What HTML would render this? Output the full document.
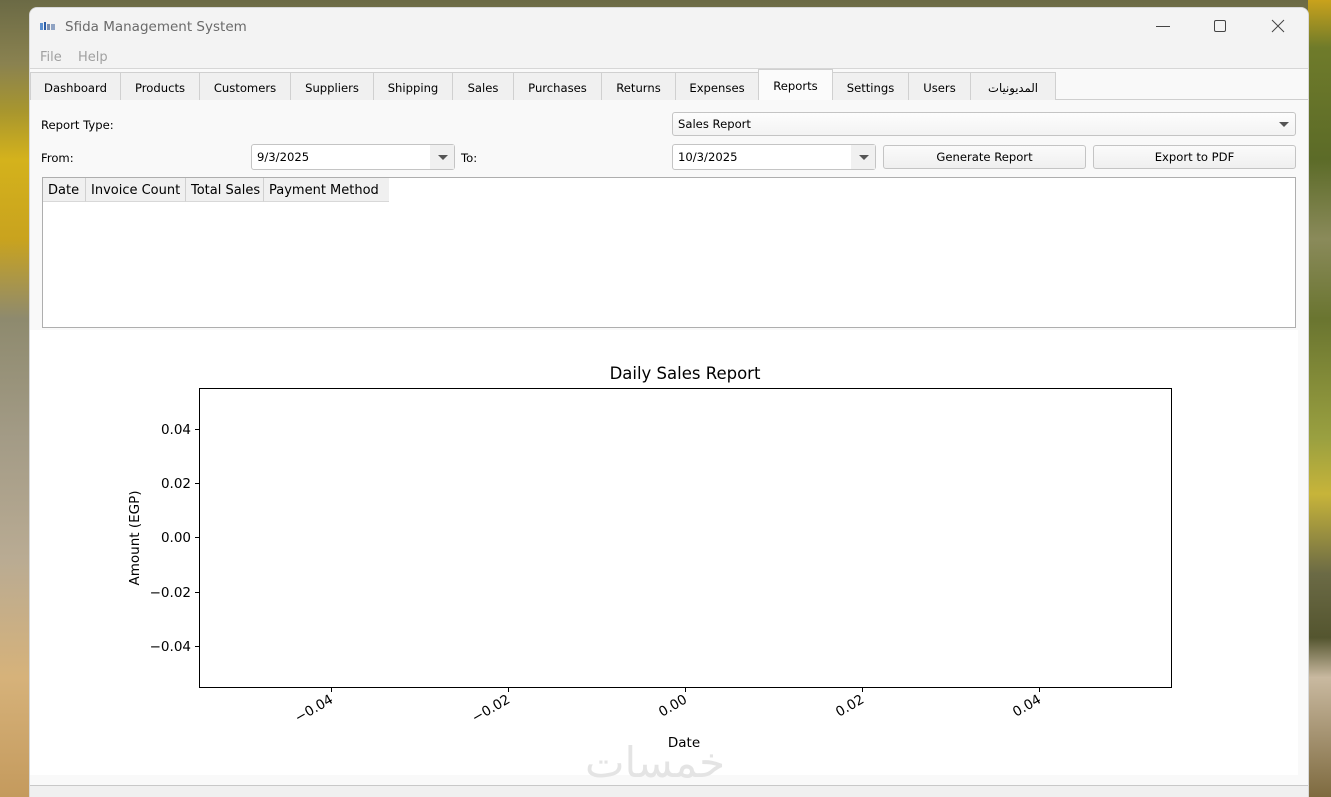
<!DOCTYPE html>
<html><head><meta charset="utf-8"><style>
*{margin:0;padding:0;box-sizing:border-box}
body{width:1331px;height:797px;overflow:hidden;position:relative;font-family:"Liberation Sans","DejaVu Sans",sans-serif;font-size:12px;color:#000;
background:linear-gradient(to bottom,#6b6a45 0,#8a8250 8%,#a8962e 14%,#d4b21c 20%,#c9a31e 30%,#8e8a6e 40%,#a39b86 55%,#b9ab93 70%,#d6b27a 85%,#c49a5d 100%);}
.right{position:absolute;left:1308px;top:0;width:23px;height:797px;background:linear-gradient(to bottom,#c9a21c 0,#6f7b2a 6%,#5c6b28 20%,#8a8a5a 30%,#6a7530 40%,#9aa040 55%,#c7b43a 62%,#6b6a45 72%,#54552f 80%,#c9b9a0 85%,#7e6a3f 100%)}
.win{position:absolute;left:30px;top:8px;width:1278px;height:789px;background:#f9f9f9;border-radius:7px 7px 0 0;overflow:hidden;box-shadow:0 0 0 1px #d8d8d8}
.title{height:37px;background:#f3f3f3;position:relative}
.title .t{position:absolute;left:35px;top:10px;color:#6a6a6a;font-family:"DejaVu Sans",sans-serif;font-size:13.5px}
.menu{height:24px;background:#f3f3f3;border-bottom:1px solid #d6d6d6;position:relative}
.menu span{position:absolute;top:5px;color:#a0a0a0;font-family:"DejaVu Sans",sans-serif;font-size:13px}
.tabs{position:absolute;top:63px;left:0;width:1278px;height:29px;border-bottom:1px solid #cfcfcf}
.tab{position:absolute;top:1px;height:28px;background:#f0f0f0;border:1px solid #d0d0d0;border-bottom:none;text-align:center;line-height:30px;font-family:"DejaVu Sans","Noto Sans CJK SC",sans-serif;font-size:11.6px}
.tab.sel{top:-2px;height:31px;background:#fbfbfb;line-height:32px;z-index:2}
.lbl{position:absolute;font-family:"DejaVu Sans",sans-serif;font-size:11.6px}
.combo{position:absolute;background:linear-gradient(#fdfdfd,#f3f3f3);border:1px solid #c4c4c4;border-radius:3px;font-family:"DejaVu Sans",sans-serif;font-size:11.6px;padding-left:5px;line-height:22px}
.combo.w{background:#fff}
.arr{position:absolute;right:6px;top:9px;width:0;height:0;border-left:5px solid transparent;border-right:5px solid transparent;border-top:5px solid #555}
.dd{position:absolute;right:0;top:0;width:24px;height:100%;background:#f0f0f0}
.btn{position:absolute;background:linear-gradient(#fbfbfb,#efefef);border:1px solid #c4c4c4;border-radius:3px;text-align:center;line-height:22px;font-family:"DejaVu Sans",sans-serif;font-size:11.6px}
.table{position:absolute;left:12px;top:169px;width:1254px;height:151px;background:#fff;border:1px solid #aeaeae}
.hd{position:absolute;top:0;height:24px;background:#f0f0f0;border-right:1px solid #d0d0d0;border-bottom:1px solid #d8d8d8;line-height:25px;font-family:"DejaVu Sans",sans-serif;font-size:13px;padding-left:5px}
.chart{position:absolute;left:0;top:322px;width:1268px;height:445px;background:#fff}
.status{position:absolute;left:0;top:777px;width:1278px;height:12px;background:#f0f0f0;border-top:1px solid #c8c8c8}
.wm{position:absolute;left:585px;top:738px;font-size:42px;color:#e4e4e4;font-family:"DejaVu Sans",sans-serif;z-index:5}
</style></head><body>
<div class="right"></div>
<div class="win">
 <div class="title">
  <svg style="position:absolute;left:9px;top:12px" width="18" height="12"><rect x="1" y="3" width="3" height="7" fill="#5b8fd0"/><rect x="5" y="2" width="2" height="8" fill="#2d5fa8"/><rect x="8" y="4" width="3" height="6" fill="#7a8fb0"/><rect x="12" y="4" width="4" height="6" fill="#8fa3c3"/></svg>
  <span class="t" style="top:11px">Sfida Management System</span>
  <svg style="position:absolute;left:1125px;top:11px" width="16" height="16"><line x1="1" y1="7.5" x2="15" y2="7.5" stroke="#444" stroke-width="1"/></svg>
  <svg style="position:absolute;left:1183px;top:11px" width="16" height="16"><rect x="1.5" y="1.5" width="11" height="11" rx="1.5" fill="none" stroke="#444" stroke-width="1"/></svg>
  <svg style="position:absolute;left:1241px;top:11px" width="16" height="16"><path d="M1 1L13 13M13 1L1 13" stroke="#444" stroke-width="1"/></svg>
 </div>
 <div class="menu"><span style="left:10px">File</span><span style="left:48px">Help</span></div>
 <div class="tabs">
  <div class="tab" style="left:0;width:91px">Dashboard</div>
  <div class="tab" style="left:90px;width:80px">Products</div>
  <div class="tab" style="left:169px;width:92px">Customers</div>
  <div class="tab" style="left:260px;width:84px">Suppliers</div>
  <div class="tab" style="left:343px;width:80px">Shipping</div>
  <div class="tab" style="left:422px;width:62px">Sales</div>
  <div class="tab" style="left:483px;width:89px">Purchases</div>
  <div class="tab" style="left:571px;width:75px">Returns</div>
  <div class="tab" style="left:645px;width:84px">Expenses</div>
  <div class="tab sel" style="left:728px;width:75px">Reports</div>
  <div class="tab" style="left:802px;width:77px">Settings</div>
  <div class="tab" style="left:878px;width:63px">Users</div>
  <div class="tab" style="left:940px;width:86px">المديونيات</div>
 </div>
 <div class="lbl" style="left:11px;top:110px">Report Type:</div>
 <div class="combo" style="left:642px;top:104px;width:624px;height:24px;line-height:23px">Sales Report<span class="arr"></span></div>
 <div class="lbl" style="left:11px;top:143px">From:</div>
 <div class="combo w" style="left:221px;top:136px;width:204px;height:26px;line-height:25px">9/3/2025<span class="dd"></span><span class="arr" style="top:10px"></span></div>
 <div class="lbl" style="left:431px;top:143px">To:</div>
 <div class="combo w" style="left:642px;top:136px;width:204px;height:26px;line-height:25px">10/3/2025<span class="dd"></span><span class="arr" style="top:10px"></span></div>
 <div class="btn" style="left:853px;top:137px;width:203px;height:24px;line-height:23px">Generate Report</div>
 <div class="btn" style="left:1063px;top:137px;width:203px;height:24px;line-height:23px">Export to PDF</div>
 <div class="table">
  <div class="hd" style="left:0;width:43px">Date</div>
  <div class="hd" style="left:43px;width:100px">Invoice Count</div>
  <div class="hd" style="left:143px;width:78px">Total Sales</div>
  <div class="hd" style="left:221px;width:125px;border-right:none">Payment Method</div>
 </div>
 <div class="chart">
 <svg width="1268" height="445" style="position:absolute;left:0;top:0;font-family:'DejaVu Sans',sans-serif">
  <g transform="translate(-30,-330)">
  <text x="685" y="379" font-size="16.5" text-anchor="middle">Daily Sales Report</text>
  <rect x="199.5" y="388.5" width="972" height="299" fill="none" stroke="#000" stroke-width="1"/>
  <g font-size="13.5" text-anchor="end">
   <line x1="195" y1="429.5" x2="199" y2="429.5" stroke="#000"/><text x="191" y="434">0.04</text>
   <line x1="195" y1="483.5" x2="199" y2="483.5" stroke="#000"/><text x="191" y="488">0.02</text>
   <line x1="195" y1="537.5" x2="199" y2="537.5" stroke="#000"/><text x="191" y="542">0.00</text>
   <line x1="195" y1="592.5" x2="199" y2="592.5" stroke="#000"/><text x="191" y="597">−0.02</text>
   <line x1="195" y1="646.5" x2="199" y2="646.5" stroke="#000"/><text x="191" y="651">−0.04</text>
  </g>
  <text transform="translate(139,538) rotate(-90)" font-size="13.5" text-anchor="middle">Amount (EGP)</text>
  <g font-size="13.5" text-anchor="end">
   <line x1="331.5" y1="688" x2="331.5" y2="692" stroke="#000"/><text transform="translate(334,702) rotate(-30)">−0.04</text>
   <line x1="508.5" y1="688" x2="508.5" y2="692" stroke="#000"/><text transform="translate(511,702) rotate(-30)">−0.02</text>
   <line x1="685.5" y1="688" x2="685.5" y2="692" stroke="#000"/><text transform="translate(688,702) rotate(-30)">0.00</text>
   <line x1="862.5" y1="688" x2="862.5" y2="692" stroke="#000"/><text transform="translate(865,702) rotate(-30)">0.02</text>
   <line x1="1039.5" y1="688" x2="1039.5" y2="692" stroke="#000"/><text transform="translate(1042,702) rotate(-30)">0.04</text>
  </g>
  <text x="684" y="747" font-size="13.5" text-anchor="middle">Date</text>
  </g>
 </svg>
 </div>
 <div class="status"></div>
</div>
<div class="wm">خمسات</div>
</body></html>
